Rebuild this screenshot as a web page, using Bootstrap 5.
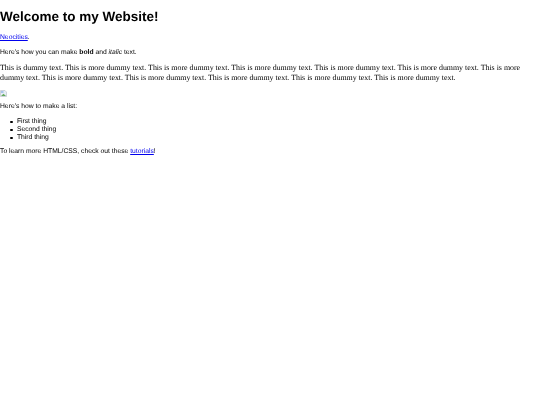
<!DOCTYPE html>
<html lang="en">
<head>
<meta charset="utf-8">
<title>Welcome to my Website!</title>
<link href="https://cdn.jsdelivr.net/npm/bootstrap@5.3.0/dist/css/bootstrap.min.css" rel="stylesheet">
<style>
body { margin: 0; background: #fff; color: #000; font-family: "Liberation Sans", Arial, sans-serif; font-size: 6.75px; line-height: 8px; text-rendering: geometricPrecision; }
.page-copy { filter: blur(.2px); }
h1 { font-family: "Liberation Sans", Arial, sans-serif; font-size: 13.5px; font-weight: 700; line-height: 15.5px; margin: 9px 0 9.9px; }
p { margin: 0 0 6.5px; }
a { color: #0000ee; text-decoration: underline; }
b { font-weight: 700; }
.serif-copy { font-family: "Liberation Serif", "Times New Roman", serif; font-size: 7.9px; line-height: 10px; }
.broken-pic { display: block; width: 7px; height: 7px; }
ul { margin: 0 0 5.9px; padding-left: 10.4px; list-style: none; }
li::before { content: ""; width: 2.6px; height: 2.6px; margin-right: 3.9px; border-radius: 50%; background: #000; flex: none; }
</style>
</head>
<body>
<div class="page-copy">
<h1>Welcome to my Website!</h1>
<p><a href="#">Neocities</a>.</p>
<p>Here's how you can make <b>bold</b> and <i>italic</i> text.</p>
<p class="serif-copy">This is dummy text. This is more dummy text. This is more dummy text. This is more dummy text. This is more dummy text. This is more dummy text. This is more dummy text. This is more dummy text. This is more dummy text. This is more dummy text. This is more dummy text. This is more dummy text.</p>
<p><svg class="broken-pic" viewBox="0 0 7 7" role="img" aria-label="broken image"><path d="M0.5 0.5H5L6.5 2V6.5H0.5Z" fill="#e8eef6" stroke="#b5bcc6" stroke-width=".6"/><path d="M1 6L3.5 3.8L6 6Z" fill="#62a85a"/><path d="M1 1H3.5V3H1Z" fill="#a9c4ea"/></svg></p>
<p>Here's how to make a list:</p>
<ul>
<li class="d-flex align-items-center">First thing</li>
<li class="d-flex align-items-center">Second thing</li>
<li class="d-flex align-items-center">Third thing</li>
</ul>
<p>To learn more HTML/CSS, check out these <a href="#">tutorials</a>!</p>
</div>
<script src="https://cdn.jsdelivr.net/npm/bootstrap@5.3.0/dist/js/bootstrap.bundle.min.js"></script>
</body>
</html>
